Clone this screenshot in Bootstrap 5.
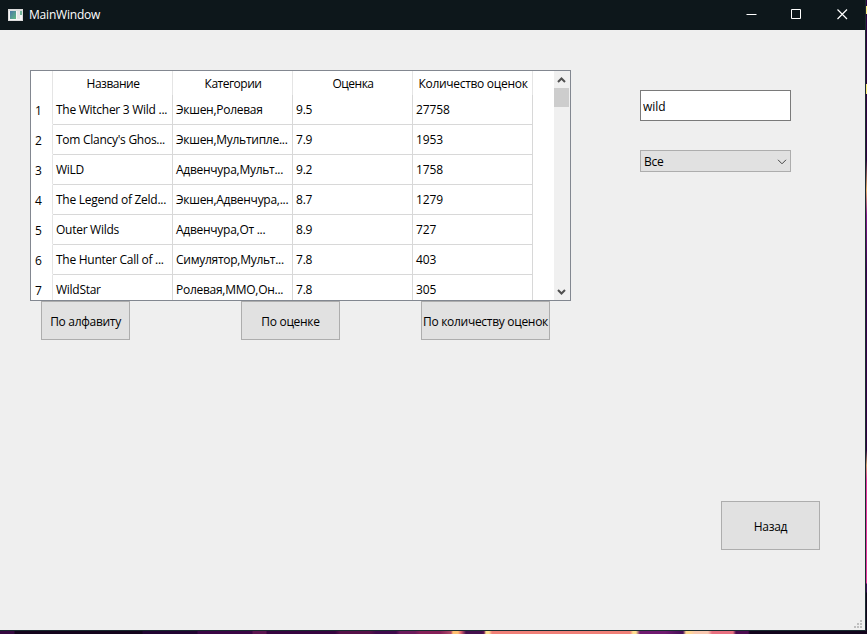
<!DOCTYPE html>
<html lang="ru">
<head>
<meta charset="utf-8">
<title>MainWindow</title>
<link href="https://cdn.jsdelivr.net/npm/bootstrap@5.3.0/dist/css/bootstrap.min.css" rel="stylesheet">
<style>
html, body { height: 634px; overflow: hidden; }
body { font: 12px/16px "Open Sans", "Noto Sans", sans-serif; color: #000; padding: 0 1px 3px 0;
  background:
    linear-gradient(#ffe97a, #ffe97a) 866px 6px/1px 8px no-repeat,
    linear-gradient(#ffe97a, #ffe97a) 866px 84px/1px 10px no-repeat,
    linear-gradient(#300040 0 160px, #f0b070 190px, #8a1a90 215px, #3a0050 270px, #300040 450px, #d8a070 465px, #e838a0 480px 583px, #3c0a55 584px 592px, #12041c 593px) 866px 0/1px 634px no-repeat,
    linear-gradient(90deg, #350840 0 14px, #14041c 15px 142px, #220432 143px 197px, #3a0645 198px 252px, #5c1450 253px 266px, #360440 267px 335px, #561048 340px 370px, #3f0a4c 376px 396px, #6c1a5c 400px 415px, #862058 420px 440px, #b04a68 451px, #ffc070 453px 458px, #e06070 461px, #45104e 466px 482px, #6a1450 484px, #ffe090 486px 489px, #f08078 492px 630px, #ffe090 633px 636px, #701a70 640px 665px, #4a105a 680px 683px, #ffd890 686px 690px, #f8c8b0 695px 708px, #e87080 712px 733px, #4c0a50 736px 748px, #12041c 750px) 0 631px/866px 3px no-repeat; }
.app-window { height: 631px; border: solid #1a2c30; border-width: 0 1px 1px 0; background: #efefef; }
.titlebar { height: 30px; background: #0d171b; color: #fff; padding-left: 8px; }
.titlebar .caption { margin-left: 6px; letter-spacing: -.2px; }
.win-btn { width: 45.5px; height: 30px; }
.workspace { padding: 40px 45px 0 30px; }
.data-grid { width: 541px; height: 231px; border: 1px solid #828790; background: #fff; }
.grid-body { width: 523px; }
.grid-line { display: grid; grid-template-columns: 22px 120px 120px 120px 120px; width: 502px; height: 30px; line-height: 29px; white-space: nowrap; flex: none; letter-spacing: -.27px; }
.grid-line > * { border-right: 1px solid #d8d8d8; border-bottom: 1px solid #d8d8d8; padding-left: 3px; overflow: hidden; }
.grid-line > :first-child { border-bottom-color: transparent; border-right-color: #e5e5e5; padding-left: 4px; line-height: 31px; }
.grid-line > :nth-child(4) { letter-spacing: -.2px; }
.grid-line > :last-child { letter-spacing: -.1px; }
.grid-line.titles { height: 24px; line-height: 26px; text-align: center; }
.grid-line.titles > * { border-bottom: 0; border-right-color: #e5e5e5; padding: 0 0 0 1px; letter-spacing: -.5px; }
.grid-line.titles > :last-child { letter-spacing: -.3px; }
.scroller { width: 16px; background: #f0f0f0; }
.thumb { width: 15px; height: 19px; background: #cdcdcd; }
.btn-flat { --bs-btn-padding-x: 0; --bs-btn-padding-y: 0; --bs-btn-font-size: 12px; --bs-btn-border-radius: 0; --bs-btn-bg: #e1e1e1; --bs-btn-color: #000; --bs-btn-border-color: #adadad; height: 39px; line-height: 16px; padding-top: 2px; white-space: nowrap; letter-spacing: -.3px; }
.sort-row { padding-left: 11px; }
.w-a { width: 89px; } .w-b { width: 99px; margin-left: 111px; } .w-c { width: 129px; margin-left: 81px; }
.side { width: 180px; padding-top: 20px; }
.field { width: 151px; height: 31px; padding: 2px 0 0 2px; border: 1px solid #7a7a7a; border-radius: 0; background: #fff; font-size: 12px; color: #000; }
.picker { width: 151px; height: 22px; margin-top: 29px; padding: 1px 3px 0; border: 1px solid #adadad; background: #e1e1e1; letter-spacing: -.3px; }
.btn-back { width: 99px; height: 49px; margin-top: 329px; }
.grip { position: absolute; right: 3px; bottom: 2px; }
svg { display: block; }
</style>
<script src="https://cdn.jsdelivr.net/npm/bootstrap@5.3.0/dist/js/bootstrap.bundle.min.js"></script>
</head>
<body>
<div class="app-window position-relative">
  <header class="titlebar d-flex align-items-center">
    <svg width="15" height="12" viewBox="0 0 15 12"><defs><linearGradient id="pane" x2="1" y2="1"><stop stop-color="#4a78a8"/><stop offset="1" stop-color="#62b982"/></linearGradient></defs><path fill="#dcdcdc" d="M0 0h15v12H0z"/><path fill="#f7f7f7" d="M1 2h13v9H1z"/><path fill="url(#pane)" d="M2 2h6v8H2z"/><path fill="#e6e6e6" d="M9 2h3v8H9z"/><path fill="#74b59a" d="M12 2h2v4h-2z"/></svg>
    <span class="caption">MainWindow</span>
    <div class="d-flex ms-auto">
      <svg class="win-btn" viewBox="0 0 45.5 30"><path fill="#fff" d="M17.5 14h10v1h-10z"/></svg>
      <svg class="win-btn" viewBox="0 0 45.5 30"><path fill="none" stroke="#fff" d="M17.5 9.5h9v9h-9z"/></svg>
      <svg class="win-btn" viewBox="0 0 45.5 30"><path fill="none" stroke="#fff" stroke-width="1.2" d="M17.5 9.5l9.500 9.500M27 9.500L17.500 19"/></svg>
    </div>
  </header>
  <main class="workspace d-flex justify-content-between">
    <section>
      <div class="data-grid d-flex overflow-hidden">
        <div class="grid-body d-flex flex-column overflow-hidden">
          <div class="grid-line titles"><div></div><div>Название</div><div>Категории</div><div>Оценка</div><div>Количество оценок</div></div>
          <div class="grid-line"><div>1</div><div>The Witcher 3 Wild ...</div><div>Экшен,Ролевая</div><div>9.5</div><div>27758</div></div>
          <div class="grid-line"><div>2</div><div>Tom Clancy's Ghos...</div><div>Экшен,Мультипле...</div><div>7.9</div><div>1953</div></div>
          <div class="grid-line"><div>3</div><div>WiLD</div><div>Адвенчура,Мульт...</div><div>9.2</div><div>1758</div></div>
          <div class="grid-line"><div>4</div><div>The Legend of Zeld...</div><div>Экшен,Адвенчура,...</div><div>8.7</div><div>1279</div></div>
          <div class="grid-line"><div>5</div><div>Outer Wilds</div><div>Адвенчура,От ...</div><div>8.9</div><div>727</div></div>
          <div class="grid-line"><div>6</div><div>The Hunter Call of ...</div><div>Симулятор,Мульт...</div><div>7.8</div><div>403</div></div>
          <div class="grid-line"><div>7</div><div>WildStar</div><div>Ролевая,ММО,Он...</div><div>7.8</div><div>305</div></div>
        </div>
        <div class="scroller d-flex flex-column">
          <svg width="16" height="17" viewBox="0 0 16 17"><path fill="none" stroke="#505050" stroke-width="2" d="M4 11l3.500-3.500L11 11"/></svg>
          <div class="thumb"></div>
          <svg class="mt-auto" width="16" height="17" viewBox="0 0 16 17"><path fill="none" stroke="#505050" stroke-width="2" d="M4 7l3.500 3.500L11 7"/></svg>
        </div>
      </div>
      <div class="sort-row d-flex">
        <button class="btn btn-flat w-a">По алфавиту</button>
        <button class="btn btn-flat w-b">По оценке</button>
        <button class="btn btn-flat w-c">По количеству оценок</button>
      </div>
    </section>
    <aside class="side d-flex flex-column">
      <input class="field" type="text" value="wild">
      <div class="picker d-flex align-items-center justify-content-between"><span>Все</span><svg width="10" height="6" viewBox="0 0 10 6"><path fill="none" stroke="#444" d="M1 .8l4 4 4-4"/></svg></div>
      <button class="btn btn-flat btn-back align-self-end">Назад</button>
    </aside>
  </main>
  <svg class="grip" width="8" height="8" viewBox="0 0 8 8"><path fill="#bfbfbf" d="M6 0h2v2H6zM3 3h2v2H3zM6 3h2v2H6zM0 6h2v2H0zM3 6h2v2H3zM6 6h2v2H6z"/></svg>
</div>
</body>
</html>
